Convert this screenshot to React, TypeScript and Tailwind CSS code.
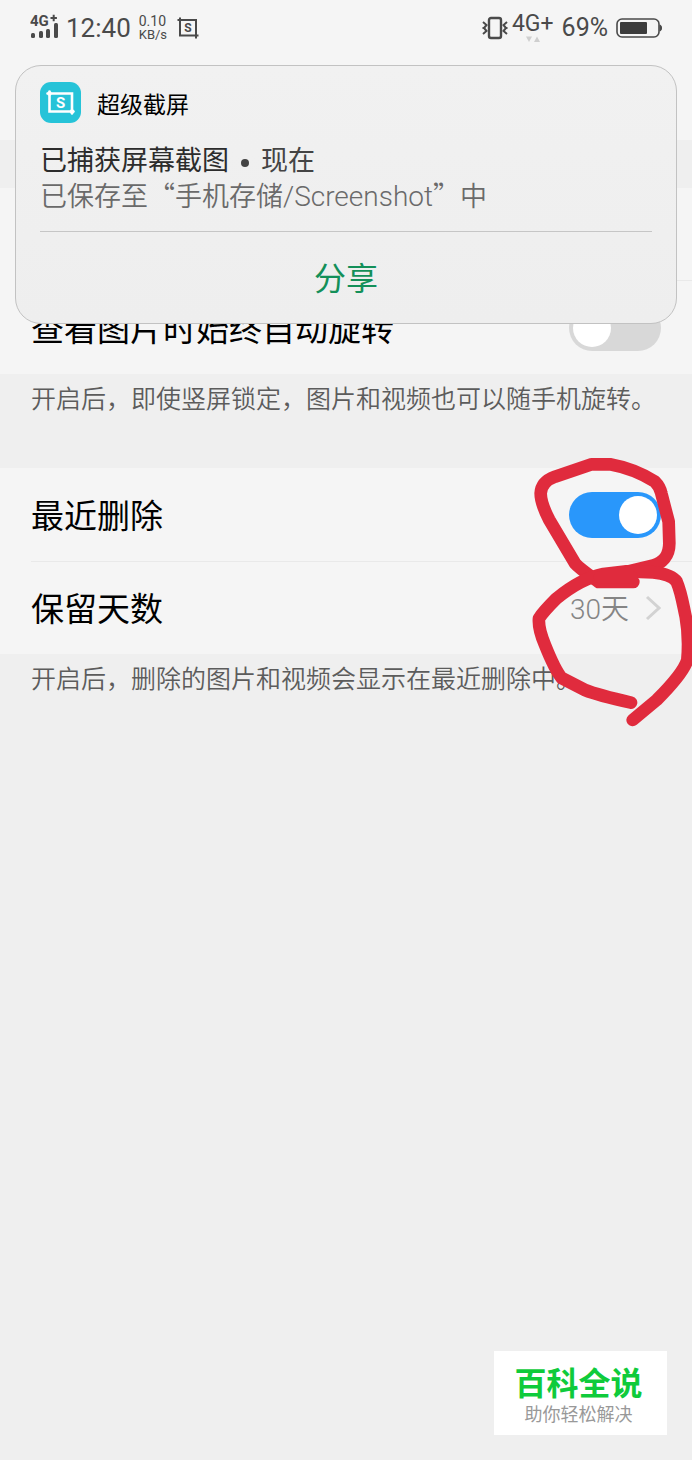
import { useState } from 'react'

const CJK = "font-['Noto_Sans_CJK_SC',sans-serif]"
const LATIN = "font-[Roboto,'Noto_Sans_CJK_SC',sans-serif]"

function CropIcon({ className }: { className?: string }) {
  return (
    <svg viewBox="0 0 22 22" className={className} fill="none" stroke="currentColor" strokeWidth="2" aria-hidden="true">
      <path d="M0.5 3H19V19M3 0.5V18.5H21.5M19 18V21.5" />
      <text
        x="11"
        y="15"
        textAnchor="middle"
        fontFamily="Roboto, sans-serif"
        fontSize="12"
        fontWeight="700"
        fill="currentColor"
        stroke="none"
      >
        S
      </text>
    </svg>
  )
}

function AppIcon() {
  return (
    <svg viewBox="0 0 41 41" className="w-[41px] h-[41px] flex-shrink-0" aria-hidden="true">
      <rect width="41" height="41" rx="11" fill="#26c3d8" />
      <path
        d="M7.500 11.500H32V31.500M9.500 9.500V29.500H33.500"
        fill="none"
        stroke="#fff"
        strokeWidth="2.600"
        strokeLinecap="round"
      />
      <circle cx="9.500" cy="11.500" r="2.200" fill="#fff" />
      <circle cx="32" cy="29.500" r="2.200" fill="#fff" />
      <text x="20.500" y="25.500" textAnchor="middle" fontFamily="Roboto, sans-serif" fontSize="15" fontWeight="700" fill="#fff">
        S
      </text>
    </svg>
  )
}

function StatusBar() {
  return (
    <div className={`h-14 px-[30px] flex items-center justify-between text-[#4a4a4a] ${LATIN}`}>
      <div className="flex items-center">
        <svg viewBox="0 0 30 34" className="w-[30px] h-[34px]" fill="currentColor" aria-hidden="true">
          <text x="0" y="15" fontFamily="Roboto, sans-serif" fontSize="15" fontWeight="700">4G</text>
          <path d="M20.500 6h2.200V3.800h2V6h2.200v2h-2.200v2.200h-2V8h-2.200z" />
          <rect x="1" y="22" width="4" height="5" rx="1.500" />
          <rect x="9" y="20" width="4" height="7" rx="1.500" />
          <rect x="16" y="18" width="4" height="9" rx="1.500" />
          <rect x="24" y="12" width="4" height="15" rx="1.500" />
        </svg>
        <span className="ml-1.5 text-[26px] leading-8">12:40</span>
        <span className="ml-2 flex flex-col text-sm leading-[13px]">
          <span>0.10</span>
          <span className="text-[13px]">KB/s</span>
        </span>
        <CropIcon className="ml-2.5 w-[22px] h-[22px]" />
      </div>
      <div className="flex items-center">
        <svg viewBox="0 0 26 24" className="w-[26px] h-6" fill="none" stroke="currentColor" aria-hidden="true">
          <rect x="7" y="2" width="12" height="20" rx="2" strokeWidth="2.400" />
          <path d="M1 6l3.500 3L2 12l2.500 3L1 18M25 6l-3.500 3 2.500 3-2.500 3 3.500 3M1.500 11v2M24.500 11v2" strokeWidth="2" />
        </svg>
        <span className="ml-1 flex flex-col items-center text-[23px] leading-5">
          4G+
          <svg viewBox="0 0 16 6" className="mt-0.5 w-4 h-1.5" fill="#cfcfcf" aria-hidden="true">
            <path d="M1 0.500h6L4 6zM9 6h6l-3-5.500z" />
          </svg>
        </span>
        <span className="ml-2 text-[25px]">69%</span>
        <svg viewBox="0 0 46 20" className="ml-2 w-[46px] h-5" aria-hidden="true">
          <rect x="1" y="1" width="42" height="18" rx="5" fill="none" stroke="#4a4a4a" strokeWidth="1.600" />
          <rect x="4" y="4" width="27" height="12" rx="1" fill="#3c3c3c" />
          <path d="M44 7c2 0.500 2 5.500 0 6z" fill="#4a4a4a" stroke="#4a4a4a" />
        </svg>
      </div>
    </div>
  )
}

function Notification() {
  return (
    <section
      className="absolute z-10 top-[65px] inset-x-[15px] px-6 pt-4 rounded-[26px] border border-[#c2c2c2] bg-gradient-to-b from-[#f1f1f1] to-[#eeeeee]"
      aria-label="通知"
    >
      <div className="flex items-center gap-4">
        <AppIcon />
        <h2 className="text-[23px] leading-8 text-black">超级截屏</h2>
      </div>
      <div className="mt-[18px] text-[27px] leading-9">
        <p className="text-[#2c2c2c]">
          已捕获屏幕截图<span className="mx-3 inline-block align-middle w-2 h-2 rounded-full bg-[#444]" />
          <span className="text-[#444]">现在</span>
        </p>
        <p className="font-[350] text-[#6a6a6a]">
          已保存至“手机存储<span className={`text-[28px] ${LATIN}`}>/Screenshot</span>”中
        </p>
      </div>
      <div className="mt-4 border-t border-[#c6c6c6]">
        <button type="button" className="w-full h-[91px] pb-1 text-[32px] text-[#139059]">
          分享
        </button>
      </div>
    </section>
  )
}

function SwitchRow({ label, defaultOn = false }: { label: string; defaultOn?: boolean }) {
  const [on, setOn] = useState(defaultOn)

  return (
    <label className="relative h-[93px] pr-[31px] flex items-center justify-between text-[33px] text-black">
      {label}
      <input
        type="checkbox"
        role="switch"
        className="sr-only"
        checked={on}
        onChange={(e) => setOn(e.target.checked)}
      />
      <span
        className={`w-[92px] h-[46px] p-1 flex items-center rounded-full transition-colors ${
          on ? 'bg-[#2997fb] justify-end' : 'bg-[#d8d8d8] justify-start'
        }`}
      >
        <span className="w-[38px] h-[38px] rounded-full bg-white" />
      </span>
    </label>
  )
}

function Footnote({ children }: { children: string }) {
  return <p className="px-[31px] pt-1.5 pb-[54px] text-[25px] leading-[34px] font-[350] text-[#5c5c5c]">{children}</p>
}

function Scribble() {
  return (
    <svg
      viewBox="0 0 516 900"
      className="absolute z-10 right-0 -top-7 w-[172px] h-[300px] pointer-events-none"
      fill="none"
      stroke="#e02b3d"
      strokeWidth="38"
      strokeLinecap="round"
      strokeLinejoin="round"
      aria-hidden="true"
    >
      <path d="M340 426H236C200 400 178 385 165 370L88 240Q62 190 62 160Q64 125 105 110L215 73H270C320 82 360 97 405 125Q420 140 424 160L446 245L448 310C448 350 425 370 400 376L300 400" />
      <path d="M333 788C280 776 220 760 195 750L125 714Q105 690 75 615Q54 565 57 535Q70 515 110 475C165 430 210 410 250 402L320 394L400 397Q455 403 470 425C485 460 490 500 497 530Q508 590 502 660Q490 700 410 780L338 840" />
      <path d="M240 412H335" />
    </svg>
  )
}

export default function App() {
  return (
    <main lang="zh-CN" className={`relative min-h-screen overflow-hidden bg-[#efefef] ${CJK}`}>
      <header className="h-[140px] bg-[#f5f5f5]">
        <StatusBar />
      </header>
      <Notification />

      <div className="mt-12 pl-[31px] bg-[#f5f5f5]">
        <div className="h-[93px] border-b border-[#e9e9e9]" />
        <SwitchRow label="查看图片时始终自动旋转" />
      </div>
      <Footnote>开启后，即使竖屏锁定，图片和视频也可以随手机旋转。</Footnote>

      <div className="relative pl-[31px] bg-[#f5f5f5]">
        <SwitchRow label="最近删除" defaultOn />
        <button
          type="button"
          className="w-full h-[93px] pr-[31px] border-t border-[#e9e9e9] flex items-center justify-between text-[33px] text-black"
        >
          保留天数
          <span className="flex items-center gap-4 text-[28px] font-[350] text-[#858585]">
            <span>
              <span className={LATIN}>30</span>天
            </span>
            <svg viewBox="0 0 16 26" className="w-4 h-[26px]" fill="none" stroke="#d2d2d2" strokeWidth="3" aria-hidden="true">
              <path d="M2 2l12 11L2 24" />
            </svg>
          </span>
        </button>
        <Scribble />
      </div>
      <Footnote>开启后，删除的图片和视频会显示在最近删除中。</Footnote>

      {/* Watermark */}
      <div className="absolute right-[25px] bottom-[25px] w-[173px] h-[84px] pt-1 pr-1 bg-white flex flex-col items-center justify-center">
        <span className="text-[32px] leading-9 font-bold text-[#0fcb3b]">百科全说</span>
        <span className="text-lg leading-7 text-[#999]">助你轻松解决</span>
      </div>
    </main>
  )
}
